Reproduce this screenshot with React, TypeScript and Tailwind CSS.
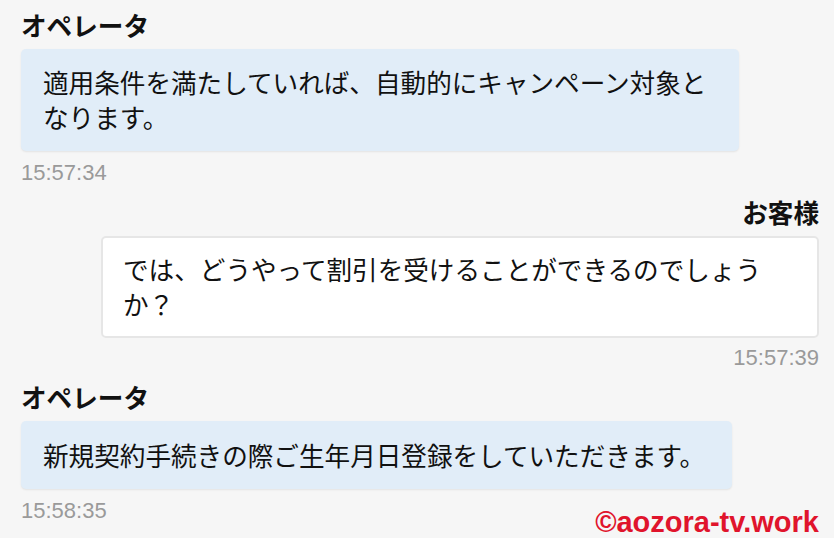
import React from "react";

const jp = { fontFamily: '"Noto Sans CJK JP", "Noto Sans", sans-serif' };
const mono = { fontFamily: '"Liberation Sans", Arial, sans-serif' };

export default function App() {
  return (
    <div
      className="relative w-[834px] h-[538px] overflow-hidden bg-[#f6f6f6] pl-[21px] pr-[15px] pt-[10px] text-[#111]"
      style={jp}
    >
      {/* Operator 1 */}
      <div className="flex flex-col items-start">
        <div className="text-[25.6px] font-bold leading-[30px]">オペレータ</div>
        <div className="mt-[9px] max-w-[718px] rounded-[5px] bg-[#e1edf8] pl-[22px] pr-[27px] pt-[15px] pb-[17px] text-[25.6px] leading-[35px] shadow-[0_1px_2px_rgba(0,0,0,0.08)]">
          適用条件を満たしていれば、自動的にキャンペーン対象となります。
        </div>
        <div className="mt-[10px] text-[22px] leading-[24px] text-[#9a9a9a]" style={mono}>
          15:57:34
        </div>
      </div>

      {/* Customer */}
      <div className="mt-[12px] flex flex-col items-end">
        <div className="text-[25.6px] font-bold leading-[30px]">お客様</div>
        <div className="mt-[9px] max-w-[718px] rounded-[5px] border-2 border-[#e6e6e6] bg-white pl-[20px] pr-[25px] pt-[13px] pb-[15px] text-[25.6px] leading-[35px]">
          では、どうやって割引を受けることができるのでしょうか？
        </div>
        <div className="mt-[8px] text-[22px] leading-[24px] text-[#9a9a9a]" style={mono}>
          15:57:39
        </div>
      </div>

      {/* Operator 2 */}
      <div className="mt-[12px] flex flex-col items-start">
        <div className="text-[25.6px] font-bold leading-[30px]">オペレータ</div>
        <div className="mt-[9px] max-w-[718px] rounded-[5px] bg-[#e1edf8] pl-[22px] pr-[27px] pt-[16px] pb-[17px] text-[25.6px] leading-[35px] shadow-[0_1px_2px_rgba(0,0,0,0.08)]">
          新規契約手続きの際ご生年月日登録をしていただきます。
        </div>
        <div className="mt-[10px] text-[22px] leading-[24px] text-[#9a9a9a]" style={mono}>
          15:58:35
        </div>
      </div>

      {/* Watermark */}
      <div
        className="absolute right-[15px] bottom-[1px] text-[29px] font-bold leading-[30px] text-[#e0142c]"
        style={mono}
      >
        ©aozora-tv.work
      </div>
    </div>
  );
}
